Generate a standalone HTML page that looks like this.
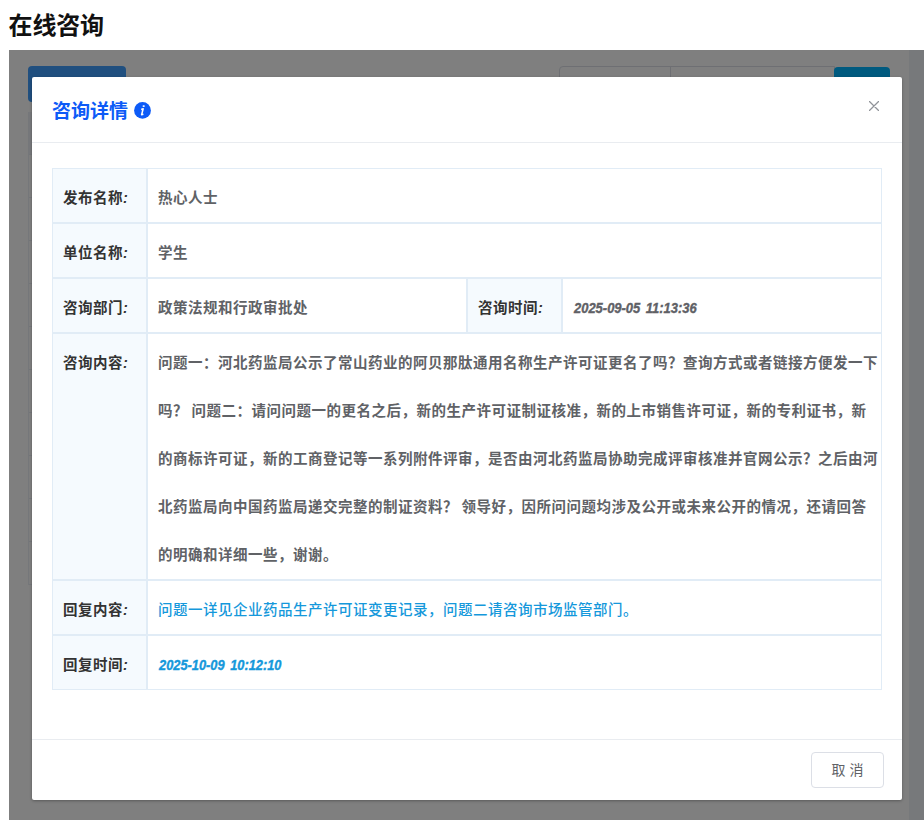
<!DOCTYPE html>
<html lang="zh-CN">
<head>
<meta charset="utf-8">
<title>在线咨询</title>
<style>
*{box-sizing:border-box;}
html,body{margin:0;padding:0;}
body{width:924px;height:820px;overflow:hidden;background:#fff;position:relative;
  font-family:"Liberation Sans","Noto Sans CJK SC",sans-serif;color:#333;}
h1.page-title{position:absolute;left:8.6px;top:9px;margin:0;font-size:24px;line-height:34px;font-weight:bold;color:#111;letter-spacing:-0.2px;}
/* page behind the overlay */
.page{position:absolute;left:9px;top:50px;width:900px;height:770px;background:#fff;}
.btn-add{position:absolute;left:19px;top:16px;width:98px;height:36px;border-radius:4px;background:#409eff;}
.search{position:absolute;left:550px;top:16px;width:276px;height:40px;border:1px solid #dcdfe6;border-radius:4px 0 0 4px;}
.search i{position:absolute;left:110px;top:0;width:1px;height:40px;background:#dcdfe6;}
.btn-search{position:absolute;left:825px;top:17px;width:56px;height:40px;border-radius:4px;background:#00b4ff;}
.grid{position:absolute;left:19px;top:62px;width:862px;height:473px;border-left:1px solid #ebeef5;}
.grid .hd{height:43px;background:#f0f3f8;border-bottom:1px solid #ebeef5;}
.grid .r{height:43px;border-bottom:1px solid #ebeef5;}
.sbar{position:absolute;left:909px;top:50px;width:15px;height:770px;background:#eff2f6;}
.mask{position:absolute;left:9px;top:50px;width:915px;height:770px;background:rgba(0,0,0,.5);}
/* dialog */
.dialog{position:absolute;left:32px;top:77px;width:870px;height:723px;background:#fff;border-radius:2px;box-shadow:0 1px 3px rgba(0,0,0,.3);}
.dlg-hd{height:66px;border-bottom:1px solid #e9ecf0;position:relative;}
.dlg-title{position:absolute;left:20px;top:21px;font-size:19px;line-height:28px;font-weight:bold;color:#0d5bf7;white-space:nowrap;}
.dlg-title svg{position:absolute;left:82px;top:3.7px;}
.dlg-close{position:absolute;left:837px;top:24px;width:10px;height:10px;}
.dlg-bd{padding:25px 20px 0 20px;height:596px;}
table.info{border-collapse:separate;border-spacing:0;width:830px;table-layout:fixed;font-size:14.5px;letter-spacing:.5px;word-spacing:-1.1px;font-weight:bold;line-height:48px;}
table.info td{border:1px solid #e1ecf6;padding:5px 10px 0 10px;vertical-align:top;color:#606266;white-space:nowrap;overflow:hidden;}
table.info td.lb{background:#f5fafe;color:#333;width:95px;}
table.info td.lb i{font-style:italic;}
.dt{display:inline-block;letter-spacing:0;word-spacing:2.2px;font-family:"Liberation Sans",sans-serif;font-style:italic;font-weight:bold;font-size:14.3px;transform:scaleX(.906);-webkit-text-stroke:0.4px;margin-left:.7px;transform-origin:0 50%;color:#5f6166;}
table.info td.reply{color:#1598db;font-weight:500;font-size:14.5px;letter-spacing:.5px;}
.reply .dt{color:#1598db;transform:scaleX(.897);}
.dlg-ft{height:61px;border-top:1px solid #e9ecf0;padding:12px 18px;text-align:right;}
.btn-cancel{display:inline-block;width:73px;height:36px;border:1px solid #dcdfe6;border-radius:4px;background:#fff;color:#606266;font-size:14px;line-height:34px;text-align:center;}
</style>
</head>
<body>
<h1 class="page-title">在线咨询</h1>
<div class="page">
  <div class="btn-add"></div>
  <div class="search"><i></i></div>
  <div class="btn-search"></div>
  <div class="grid"><div class="hd"></div><div class="r"></div><div class="r"></div><div class="r"></div><div class="r"></div><div class="r"></div><div class="r"></div><div class="r"></div><div class="r"></div><div class="r"></div><div class="r"></div></div>
</div>
<div class="sbar"></div>
<div class="mask"></div>
<div class="dialog">
  <div class="dlg-hd">
    <div class="dlg-title">咨询详情<svg width="17" height="17" viewBox="0 0 17 17"><circle cx="8.5" cy="8.4" r="8.4" fill="#0d5bf7"/><ellipse cx="9.7" cy="4.1" rx="1.2" ry="0.95" fill="#fff"/><path d="M7.2 7.5L9.2 6.7L7.6 12.7L9.4 12.3" stroke="#fff" stroke-width="1.5" fill="none" stroke-linejoin="round"/></svg></div>
    <svg class="dlg-close" viewBox="0 0 10 10"><path d="M0.3 0.3L9.7 9.7M9.7 0.3L0.3 9.7" stroke="#909399" stroke-width="1.25" stroke-linecap="round" fill="none"/></svg>
  </div>
  <div class="dlg-bd">
    <table class="info">
      <colgroup><col style="width:95px"><col style="width:320px"><col style="width:95px"><col style="width:320px"></colgroup>
      <tr><td class="lb">发布名称<i>:</i></td><td colspan="3">热心人士</td></tr>
      <tr><td class="lb">单位名称<i>:</i></td><td colspan="3">学生</td></tr>
      <tr><td class="lb">咨询部门<i>:</i></td><td>政策法规和行政审批处</td><td class="lb">咨询时间<i>:</i></td><td><span class="dt">2025-09-05 11:13:36</span></td></tr>
      <tr><td class="lb">咨询内容<i>:</i></td><td colspan="3">问题一：河北药监局公示了常山药业的阿贝那肽通用名称生产许可证更名了吗？查询方式或者链接方便发一下<br>吗？ 问题二：请问问题一的更名之后，新的生产许可证制证核准，新的上市销售许可证，新的专利证书，新<br>的商标许可证，新的工商登记等一系列附件评审，是否由河北药监局协助完成评审核准并官网公示？之后由河<br>北药监局向中国药监局递交完整的制证资料？ 领导好，因所问问题均涉及公开或未来公开的情况，还请回答<br>的明确和详细一些，谢谢。</td></tr>
      <tr><td class="lb">回复内容<i>:</i></td><td colspan="3" class="reply">问题一详见企业药品生产许可证变更记录，问题二请咨询市场监管部门。</td></tr>
      <tr><td class="lb">回复时间<i>:</i></td><td colspan="3" class="reply"><span class="dt">2025-10-09 10:12:10</span></td></tr>
    </table>
  </div>
  <div class="dlg-ft"><span class="btn-cancel">取 消</span></div>
</div>
</body>
</html>
